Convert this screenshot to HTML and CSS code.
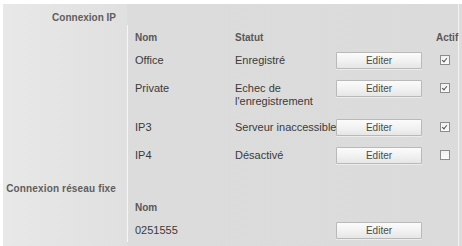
FILE: index.html
```html
<!DOCTYPE html>
<html lang="fr">
<head>
<meta charset="utf-8">
<title>Connexions</title>
<link rel="stylesheet" href="styles.css">
</head>
<body>
<div class="panel">
  <div class="sec-title"><span class="lab">Connexion IP</span></div>
  <div class="sec sec-ip">
    <div class="side"></div>
    <div class="main">
      <div class="row head">
        <div class="c-name">Nom</div>
        <div class="c-stat">Statut</div>
        <div class="c-btn"></div>
        <div class="c-act">Actif</div>
      </div>
      <div class="row r1">
        <div class="c-name">Office</div>
        <div class="c-stat">Enregistré</div>
        <div class="c-btn"><button class="btn">Editer</button></div>
        <div class="c-act"><span class="cb on"></span></div>
      </div>
      <div class="row r2">
        <div class="c-name">Private</div>
        <div class="c-stat">Echec de<br>l'enregistrement</div>
        <div class="c-btn"><button class="btn">Editer</button></div>
        <div class="c-act"><span class="cb on"></span></div>
      </div>
      <div class="row r3">
        <div class="c-name">IP3</div>
        <div class="c-stat">Serveur inaccessible</div>
        <div class="c-btn"><button class="btn">Editer</button></div>
        <div class="c-act"><span class="cb on"></span></div>
      </div>
      <div class="row r4">
        <div class="c-name">IP4</div>
        <div class="c-stat">Désactivé</div>
        <div class="c-btn"><button class="btn">Editer</button></div>
        <div class="c-act"><span class="cb"></span></div>
      </div>
    </div>
  </div>
  <div class="sec sec-fixe">
    <div class="side"><span class="lab lab-wide">Connexion réseau fixe</span></div>
    <div class="main">
      <div class="row head">
        <div class="c-name">Nom</div>
      </div>
      <div class="row r1">
        <div class="c-name">0251555</div>
        <div class="c-stat"></div>
        <div class="c-btn"><button class="btn">Editer</button></div>
        <div class="c-act"></div>
      </div>
    </div>
  </div>
</div>
</body>
</html>
```

FILE: styles.css
```css
html, body {
  margin: 0;
  padding: 0;
  background: #ffffff;
}
body {
  font-family: "Liberation Sans", Arial, sans-serif;
  color: #3a3a3a;
}
.panel {
  margin: 4px 0 0 3px;
  height: 242px;
  background: linear-gradient(to right, #e8e8e8 0, #e0e0e0 124px, #dcdcdc 124px, #dbdbdb 455px, #f2f2f2 455px, #f2f2f2 456px, #dcdcdc 456px);
  overflow: hidden;
}
.lab {
  font-size: 10px;
  font-weight: bold;
  color: #5e5e5e;
  line-height: 14px;
  white-space: nowrap;
}
.lab-wide { letter-spacing: 0.15px; }
.sec-title {
  height: 21px;
  width: 113px;
  text-align: right;
  padding-top: 3px;
  box-sizing: border-box;
}
.sec {
  display: grid;
  grid-template-columns: 124px 1fr;
}
.side {
  text-align: right;
  padding-right: 11px;
  box-sizing: border-box;
}
.main {
  border-left: 1px solid #f6f6f6;
}
.sec-ip .main {
  padding-top: 6px;
  height: 150px;
  box-sizing: border-box;
}
.sec-fixe .side {
  padding-top: 3px;
}
.sec-fixe .main {
  padding-top: 26px;
  height: 67px;
  box-sizing: border-box;
}
.row {
  display: grid;
  grid-template-columns: 107px 101px 86px 14px 24px;
  align-items: start;
  font-size: 11px;
  line-height: 13px;
}
.row > div { white-space: nowrap; }
.c-name { padding-left: 7px; }
.row .c-name, .row .c-stat { padding-top: 2px; }
.c-act { grid-column: 5; }
.head {
  height: 21px;
  font-size: 10px;
  font-weight: bold;
  color: #585858;
  line-height: 14px;
}
.head .c-name, .head .c-stat { padding-top: 0; }
.r1 { height: 28px; }
.r2 { height: 39px; }
.r3 { height: 28px; }
.r4 { height: 28px; }
.btn {
  display: block;
  width: 86px;
  height: 17px;
  margin: 0;
  padding: 0;
  border: 1px solid #b9b9b9;
  border-radius: 1px;
  background: linear-gradient(to bottom, #fbfbfb 0, #f2f2f2 50%, #e6e6e6 100%);
  box-shadow: 0 1px 0 #ececec;
  font-family: "Liberation Sans", Arial, sans-serif;
  font-size: 10px;
  color: #4a4a4a;
  line-height: 15px;
  text-align: center;
}
.cb {
  display: block;
  width: 10px;
  height: 10px;
  margin: 3px 0 0 4px;
  box-sizing: border-box;
  border: 1px solid #8c8c8c;
  background: linear-gradient(to bottom, #f0f0f0, #fafafa);
  position: relative;
}
.cb.on::after {
  content: "";
  position: absolute;
  left: 2px;
  top: 1px;
  width: 2px;
  height: 4px;
  border-right: 1px solid #555;
  border-bottom: 1px solid #555;
  transform: rotate(40deg);
}
```
